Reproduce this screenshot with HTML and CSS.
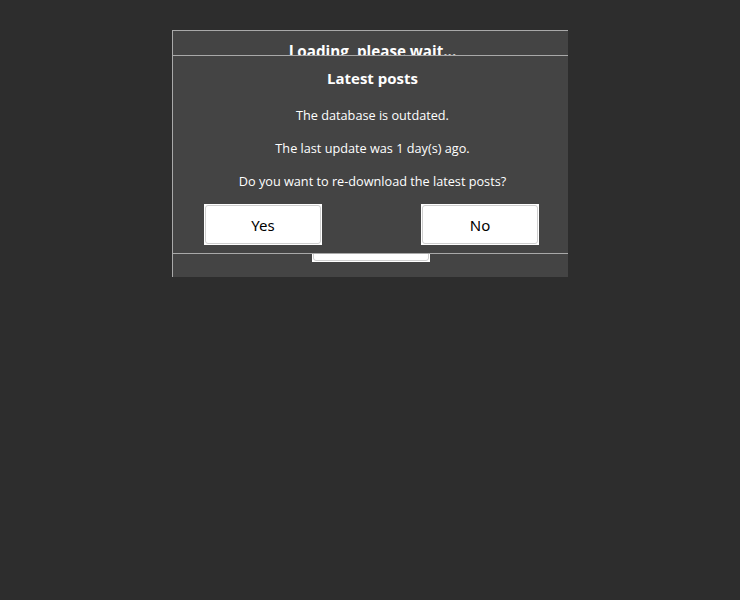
FILE: index.html
```html
<!DOCTYPE html>
<html>
<head>
<meta charset="utf-8">
<link rel="stylesheet" href="styles.css">
</head>
<body>
<div class="panel">
  <div class="loading">Loading, please wait...</div>
  <div class="hidden-btn-wrap"><div class="btn-outer"><div class="btn-inner"></div></div></div>
  <div class="dialog">
    <div class="title">Latest posts</div>
    <p class="msg">The database is outdated.</p>
    <p class="msg">The last update was 1 day(s) ago.</p>
    <p class="msg">Do you want to re-download the latest posts?</p>
    <div class="actions">
      <div class="btn-outer"><div class="btn-inner">Yes</div></div>
      <div class="btn-outer"><div class="btn-inner">No</div></div>
    </div>
  </div>
</div>
</body>
</html>
```
FILE: styles.css
```css
html, body {
  margin: 0;
  padding: 0;
  background: #2d2d2d;
  height: 100%;
}
body {
  font-family: "Open Sans", "Noto Sans", sans-serif;
  color: #ffffff;
  padding: 30px 0 0 172px;
  box-sizing: border-box;
}
.panel {
  position: relative;
  width: 396px;
  height: 247px;
  box-sizing: border-box;
  background: #444444;
  border-left: 1px solid #a9a9a9;
  border-top: 1px solid #a9a9a9;
  overflow: hidden;
}
.loading {
  font-weight: 700;
  font-size: 15.2px;
  line-height: 22px;
  text-align: center;
  padding-top: 9px;
  padding-left: 4px;
}
.hidden-btn-wrap {
  display: flex;
  justify-content: center;
  padding-top: 160px;
  padding-left: 1px;
}
.hidden-btn-wrap .btn-outer {
  width: 118px;
  height: 40px;
}
.dialog {
  position: absolute;
  left: -1px;
  top: 24px;
  width: 397px;
  height: 199px;
  box-sizing: border-box;
  background: #444444;
  border-top: 1px solid #a9a9a9;
  border-bottom: 1px solid #a9a9a9;
  border-left: 1px solid #a9a9a9;
  display: flex;
  flex-direction: column;
  align-items: center;
}
.title {
  font-weight: 700;
  font-size: 15px;
  line-height: 20px;
  margin-top: 12px;
  padding-left: 3px;
}
.msg {
  margin: 0;
  font-size: 12.7px;
  line-height: 17px;
  padding-left: 3px;
}
.title + .msg {
  margin-top: 19px;
}
.msg + .msg {
  margin-top: 16px;
}
.actions {
  align-self: stretch;
  display: flex;
  justify-content: space-between;
  padding: 0 30px 0 31px;
  margin-top: 14px;
}
.btn-outer {
  width: 118px;
  height: 41px;
  box-sizing: border-box;
  background: #ffffff;
  padding: 1px;
}
.btn-inner {
  height: 100%;
  box-sizing: border-box;
  border: 1px solid #cfcfcf;
  border-radius: 3px;
  color: #000000;
  font-family: "Noto Sans", "Open Sans", sans-serif;
  font-size: 15px;
  display: flex;
  align-items: center;
  justify-content: center;
  padding-top: 1px;
}
```
